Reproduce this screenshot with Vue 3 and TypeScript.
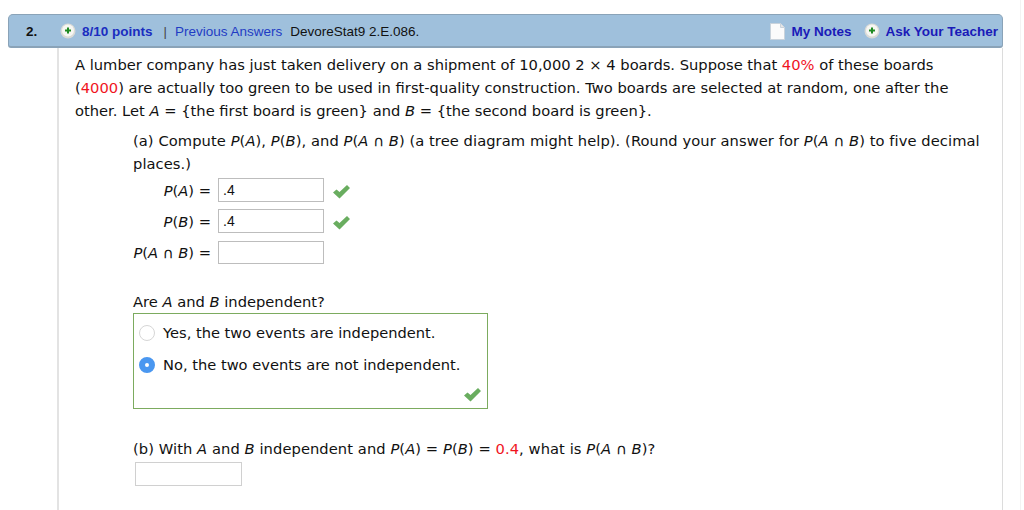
<template>
  <div class="page">
    <header class="bar">
      <span class="num">2.</span>
      <span class="plus"><svg viewBox="0 0 16 16" width="16" height="16"><circle cx="8" cy="8" r="7.5" fill="#d9dad6" /><circle cx="8" cy="7.5" r="6" fill="#f6f6f2" /><path d="M8 4.5v6M5 7.5h6" stroke="#1f8a22" stroke-width="2" /></svg></span>
      <span class="points">8/10 points</span>
      <span class="sep">|</span>
      <span class="prev">Previous Answers</span>
      <span class="code">DevoreStat9 2.E.086.</span>
      <span class="spacer"></span>
      <svg class="note" viewBox="0 0 15 17" width="15" height="17"><path d="M.5.5h10l4 4v12H.5z" fill="#fbfbfb" stroke="#c9d3dc" /><path d="M10.5.5v4h4" fill="#e6e6e6" stroke="#c9d3dc" /></svg>
      <span class="link notes">My Notes</span>
      <span class="plus ask"><svg viewBox="0 0 16 16" width="16" height="16"><circle cx="8" cy="8" r="7.5" fill="#d9dad6" /><circle cx="8" cy="7.5" r="6" fill="#f6f6f2" /><path d="M8 4.5v6M5 7.5h6" stroke="#1f8a22" stroke-width="2" /></svg></span>
      <span class="link">Ask Your Teacher</span>
    </header>

    <main class="body">
      <p class="intro">
        A lumber company has just taken delivery on a shipment of 10,000 2 × 4 boards. Suppose that <b>40%</b> of these boards<br />
        (<b>4000</b>) are actually too green to be used in first-quality construction. Two boards are selected at random, one after the<br />
        other. Let <i>A</i> = {the first board is green} and <i>B</i> = {the second board is green}.
      </p>

      <section class="part">
        <p class="ask-a">
          (a) Compute <i>P</i>(<i>A</i>), <i>P</i>(<i>B</i>), and <i>P</i>(<i>A</i> ∩ <i>B</i>) (a tree diagram might help). (Round your answer for <i>P</i>(<i>A</i> ∩ <i>B</i>) to five decimal<br />
          places.)
        </p>

        <div class="answers">
          <div v-for="row in rows" :key="row.id" class="answer">
            <span class="label"><i>P</i>(<template v-if="row.id === 'ab'"><i>A</i> ∩ <i>B</i></template><i v-else>{{ row.name }}</i>) =</span>
            <span class="field">{{ row.value }}</span>
            <svg v-if="row.value" class="check" viewBox="0 0 17 14" width="17" height="14"><path d="M0 7.5L3.5 4.5 6.5 7 14 0l3 3L6.5 13.5z" fill="#69ad5f" /></svg>
          </div>
        </div>

        <p class="independent">Are <i>A</i> and <i>B</i> independent?</p>

        <div class="choices">
          <div class="choice"><span class="radio"></span>Yes, the two events are independent.</div>
          <div class="choice"><span class="radio on"></span>No, the two events are not independent.</div>
          <svg class="check box-check" viewBox="0 0 17 14" width="17" height="14"><path d="M0 7.5L3.5 4.5 6.5 7 14 0l3 3L6.5 13.5z" fill="#69ad5f" /></svg>
        </div>

        <p class="ask-b">
          (b) With <i>A</i> and <i>B</i> independent and <i>P</i>(<i>A</i>) = <i>P</i>(<i>B</i>) = <b>0.4</b>, what is <i>P</i>(<i>A</i> ∩ <i>B</i>)?
        </p>
        <span class="field wide"></span>
      </section>
    </main>
  </div>
</template>

<script setup lang="ts">
// Lignes de réponse de la partie (a)
const rows = [
  { id: 'a', name: 'A', value: '.4' },
  { id: 'b', name: 'B', value: '.4' },
  { id: 'ab', name: '', value: '' },
]
</script>

<style>
html,
body {
  background: #fff;
  overflow: hidden;
}
</style>

<style scoped>
.page {
  width: 1024px;
  height: 510px;
  box-sizing: border-box;
  padding: 14px 21px 0 8px;
  overflow: hidden;
  background: linear-gradient(#f3f3f3, #f3f3f3) 1020px 0 / 1px 100% no-repeat;
  font-family: "DejaVu Sans", Verdana, sans-serif;
  font-size: 14.7px;
  line-height: 23px;
  color: #111;
}

.bar {
  display: flex;
  align-items: center;
  height: 34px;
  box-sizing: border-box;
  padding: 1px 4px 0 17px;
  background: #9fc0dc;
  border: 1px solid #8aa3b8;
  border-bottom-width: 2px;
  border-radius: 5px 5px 3px 3px;
  font-family: "Liberation Sans", Arial, sans-serif;
  font-size: 13.5px;
}

.num {
  width: 34px;
  font-weight: 700;
}

.plus {
  display: flex;
  width: 16px;
  height: 16px;
  margin-right: 6px;
}

.points {
  font-weight: 700;
  color: #1a2dc0;
}

.sep {
  margin: 0 8px 0 11px;
  color: #444;
  font-size: 13px;
}

.prev {
  color: #1f3cc4;
}

.code {
  margin-left: 8px;
}

.spacer {
  flex: 1;
}

.note {
  margin-right: 6px;
}

.link {
  font-weight: 700;
  color: #1a1ab8;
}

.notes {
  margin-right: 13px;
}

.ask {
  margin-right: 5px;
}

.body {
  height: 462px;
  margin: 0 0 0 49px;
  box-sizing: border-box;
  padding: 5px 0 0 16px;
  border-left: 2px solid #e3e3e3;
  border-right: 1px solid #dcdcdc;
}

p {
  margin: 0;
}

b {
  font-weight: 400;
  color: #f0141e;
}

.part {
  margin: 7px 0 0 58px;
}

.ask-a,
.ask-b {
  letter-spacing: 0.07px;
}

.answers {
  display: flex;
  flex-direction: column;
  gap: 7px;
  margin-top: 3px;
}

.answer {
  display: flex;
  align-items: center;
  height: 24px;
}

.answer:last-child .field {
  height: 23px;
  margin-top: 1px;
}

.label {
  width: 78px;
  margin-right: 7px;
  text-align: right;
  white-space: nowrap;
}

.field {
  display: block;
  width: 106px;
  height: 24px;
  box-sizing: border-box;
  padding-left: 4px;
  background: #fff;
  border: 1px solid #bdbdbd;
  font-family: "Liberation Sans", Arial, sans-serif;
  font-size: 14px;
  line-height: 22px;
}

.check {
  margin: 3px 0 0 9px;
}

.independent {
  margin-top: 26px;
}

.choices {
  position: relative;
  width: 355px;
  height: 96px;
  box-sizing: border-box;
  padding-top: 7px;
  border: 1px solid #7cab5f;
  font-size: 14.65px;
}

.choice {
  display: flex;
  align-items: center;
  gap: 8px;
  height: 23px;
  margin-bottom: 9px;
  padding-left: 5px;
}

.radio {
  width: 16px;
  height: 16px;
  box-sizing: border-box;
  border: 1px solid #d6d6d6;
  border-radius: 50%;
  background: #fff;
}

.radio.on {
  border: 6px solid #4a97f0;
  background: #fff;
}

.box-check {
  position: absolute;
  right: 6px;
  bottom: 6px;
}

.ask-b {
  margin-top: 28px;
}

.wide {
  width: 107px;
  margin: 2px 0 0 2px;
  border-color: #d0d0d0;
}
</style>
